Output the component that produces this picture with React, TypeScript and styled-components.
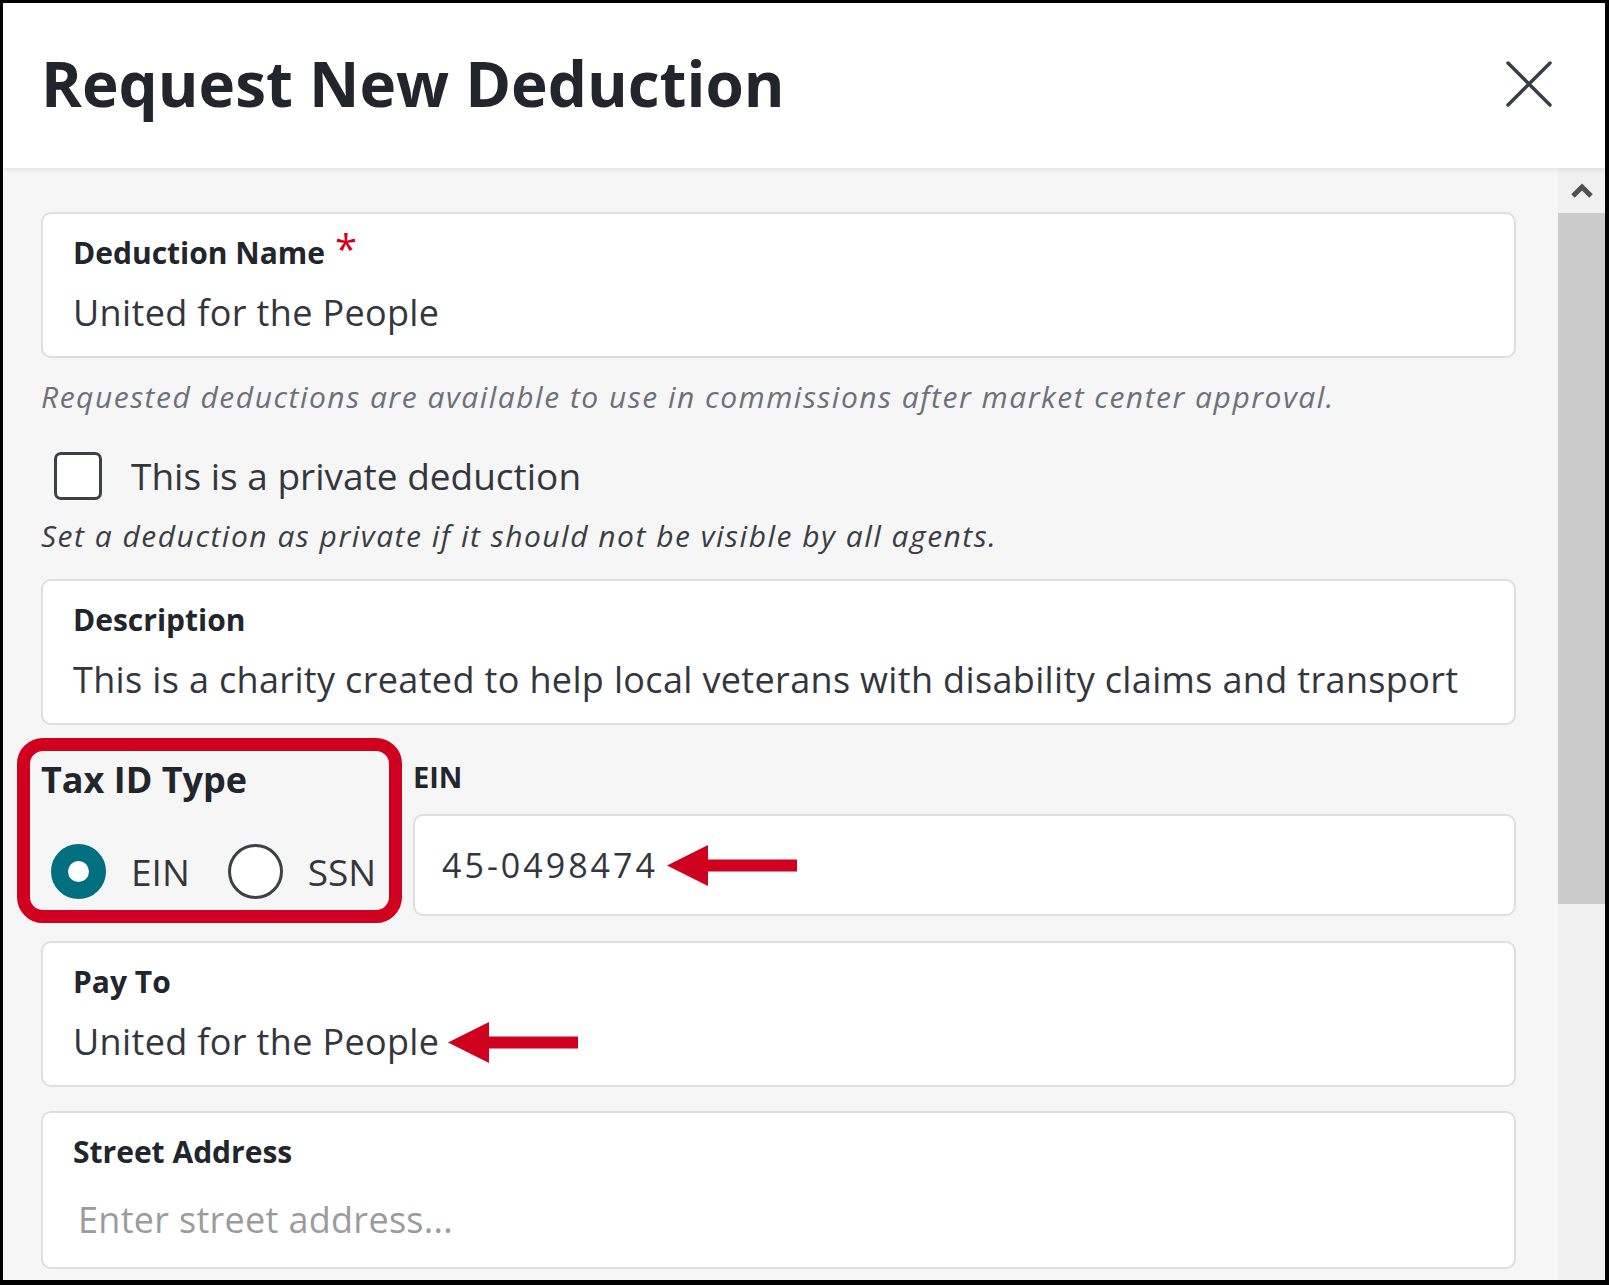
import React from "react";
import styled, { createGlobalStyle } from "styled-components";

const Ink = "#22252c";
const Body = "#33363d";
const Muted = "#6d707a";
const Line = "#dedede";
const Teal = "#006f80";
const Mark = "#d0011f";

const GlobalStyle = createGlobalStyle`
  html, body {
    margin: 0;
    padding: 0;
  }
  body {
    font-family: "Open Sans", "Noto Sans", sans-serif;
    background: #000;
  }
  * {
    box-sizing: border-box;
  }
`;

const Frame = styled.div`
  width: 1609px;
  height: 1285px;
  border: solid #000;
  border-width: 3px 4px 5px 3px;
  display: flex;
  flex-direction: column;
  overflow: hidden;
  background: #f6f6f6;
`;

const Header = styled.header`
  flex: none;
  height: 165px;
  display: flex;
  align-items: center;
  justify-content: space-between;
  padding: 0 53px 4px 38px;
  background: #ffffff;
  box-shadow: 0 2px 5px rgba(0, 0, 0, 0.08);
  position: relative;
  z-index: 1;
`;

const Title = styled.h1`
  margin: 0;
  font-size: 62px;
  line-height: 77px;
  font-weight: 700;
  color: ${Ink};
`;

const CloseButton = styled.button`
  border: none;
  background: none;
  padding: 0;
  width: 46px;
  height: 46px;
  display: flex;
  cursor: pointer;
`;

const Main = styled.div`
  flex: 1;
  min-height: 0;
  display: flex;
`;

const Content = styled.div`
  flex: 1;
  overflow: hidden;
  padding: 44px 42px 0 38px;
`;

const Scrollbar = styled.div`
  flex: none;
  width: 47px;
  background: #f0f0f0;
  display: flex;
  flex-direction: column;
`;

const ScrollUp = styled.div`
  height: 45px;
  display: flex;
  align-items: center;
  justify-content: center;
`;

const Thumb = styled.div`
  height: 691px;
  background: #cbcbcb;
`;

const Card = styled.div<{ $gap?: number }>`
  margin-top: ${(p) => p.$gap ?? 0}px;
  background: #ffffff;
  border: 2px solid ${Line};
  border-radius: 10px;
  padding: 21px 30px 21px;
`;

const Label = styled.div`
  font-size: 30px;
  line-height: 36px;
  font-weight: 700;
  color: ${Ink};
`;

const Required = styled.span`
  color: ${Mark};
  font-size: 40px;
  line-height: 0;
  font-weight: 400;
  margin-left: 10px;
`;

const Value = styled.div`
  display: flex;
  align-items: center;
  gap: 9px;
  margin-top: 20px;
  font-size: 36px;
  line-height: 44px;
  letter-spacing: 0.35px;
  color: ${Body};
`;

const Placeholder = styled.div`
  margin-top: 20px;
  padding: 8px 5px 4px;
  font-size: 36px;
  line-height: 44px;
  letter-spacing: 0.3px;
  color: #9b9b9b;
`;

const Helper = styled.p<{ $dark?: boolean; $gap: number }>`
  margin: ${(p) => p.$gap}px 0 0;
  font-size: 30px;
  line-height: 36px;
  font-style: italic;
  letter-spacing: 1.5px;
  color: ${(p) => (p.$dark ? "#3a3d44" : Muted)};
`;

const CheckRow = styled.label`
  display: flex;
  align-items: center;
  gap: 29px;
  margin: 37px 0 0 13px;
  font-size: 37px;
  line-height: 44px;
  color: ${Body};
`;

const CheckBox = styled.span`
  width: 48px;
  height: 48px;
  border: 3px solid #3d4047;
  border-radius: 7px;
  background: #ffffff;
`;

const TaxRow = styled.div`
  display: grid;
  grid-template-columns: 360px 1fr;
  column-gap: 12px;
  margin-top: 13px;
`;

const TaxGroup = styled.div`
  position: relative;
  padding-top: 21px;
`;

const GroupLabel = styled.div`
  font-size: 36px;
  line-height: 42px;
  font-weight: 700;
  color: ${Ink};
`;

const RadioRow = styled.div`
  display: flex;
  align-items: center;
  gap: 38px;
  margin: 43px 0 0 10px;
`;

const Option = styled.label`
  display: flex;
  align-items: center;
  gap: 25px;
  font-size: 37px;
  line-height: 44px;
  color: ${Body};
`;

const Radio = styled.span<{ $on?: boolean }>`
  width: 55px;
  height: 55px;
  border-radius: 50%;
  background: #ffffff;
  border: ${(p) => (p.$on ? `17px solid ${Teal}` : "3px solid #3d4047")};
`;

const Annotation = styled.div`
  position: absolute;
  left: -24px;
  top: 0;
  width: 385px;
  height: 185px;
  border: 13px solid ${Mark};
  border-radius: 26px;
  pointer-events: none;
`;

const EinField = styled.div`
  padding-top: 21px;
`;

const SmallLabel = styled.div`
  font-size: 29px;
  line-height: 36px;
  font-weight: 700;
  color: ${Ink};
`;

const InputBox = styled.div`
  margin-top: 19px;
  height: 102px;
  display: flex;
  align-items: center;
  gap: 9px;
  padding: 0 27px;
  background: #ffffff;
  border: 2px solid ${Line};
  border-radius: 10px;
  font-size: 34px;
  color: ${Body};
`;

const Digits = styled.span`
  letter-spacing: 3px;
`;

function Arrow() {
  return (
    <svg width="130" height="41" viewBox="0 0 130 41">
      <polygon points="0,20.5 41,0 41,41" fill={Mark} />
      <rect x="38" y="14.5" width="92" height="12" fill={Mark} />
    </svg>
  );
}

export default function App() {
  return (
    <>
      <GlobalStyle />
      <Frame>
        <Header>
          <Title>Request New Deduction</Title>
          <CloseButton aria-label="Close">
            <svg width="46" height="46" viewBox="0 0 46 46">
              <path d="M2 2 L44 44 M44 2 L2 44" stroke="#3a3f47" strokeWidth="3.5" strokeLinecap="round" />
            </svg>
          </CloseButton>
        </Header>
        <Main>
          <Content>
            <Card>
              <Label>
                Deduction Name<Required>*</Required>
              </Label>
              <Value>United for the People</Value>
            </Card>
            <Helper $gap={21}>
              Requested deductions are available to use in commissions after market center approval.
            </Helper>
            <CheckRow>
              <CheckBox />
              This is a private deduction
            </CheckRow>
            <Helper $gap={18} $dark>
              Set a deduction as private if it should not be visible by all agents.
            </Helper>
            <Card $gap={25}>
              <Label>Description</Label>
              <Value>This is a charity created to help local veterans with disability claims and transport</Value>
            </Card>
            <TaxRow>
              <TaxGroup>
                <GroupLabel>Tax ID Type</GroupLabel>
                <RadioRow>
                  <Option>
                    <Radio $on />
                    EIN
                  </Option>
                  <Option>
                    <Radio />
                    SSN
                  </Option>
                </RadioRow>
                <Annotation />
              </TaxGroup>
              <EinField>
                <SmallLabel>EIN</SmallLabel>
                <InputBox>
                  <Digits>45-0498474</Digits>
                  <Arrow />
                </InputBox>
              </EinField>
            </TaxRow>
            <Card $gap={25}>
              <Label>Pay To</Label>
              <Value>
                United for the People
                <Arrow />
              </Value>
            </Card>
            <Card $gap={24}>
              <Label>Street Address</Label>
              <Placeholder>Enter street address...</Placeholder>
            </Card>
          </Content>
          <Scrollbar>
            <ScrollUp>
              <svg width="24" height="16" viewBox="0 0 24 16">
                <polyline points="3,13 12,4 21,13" fill="none" stroke="#505050" strokeWidth="5" />
              </svg>
            </ScrollUp>
            <Thumb />
          </Scrollbar>
        </Main>
      </Frame>
    </>
  );
}
